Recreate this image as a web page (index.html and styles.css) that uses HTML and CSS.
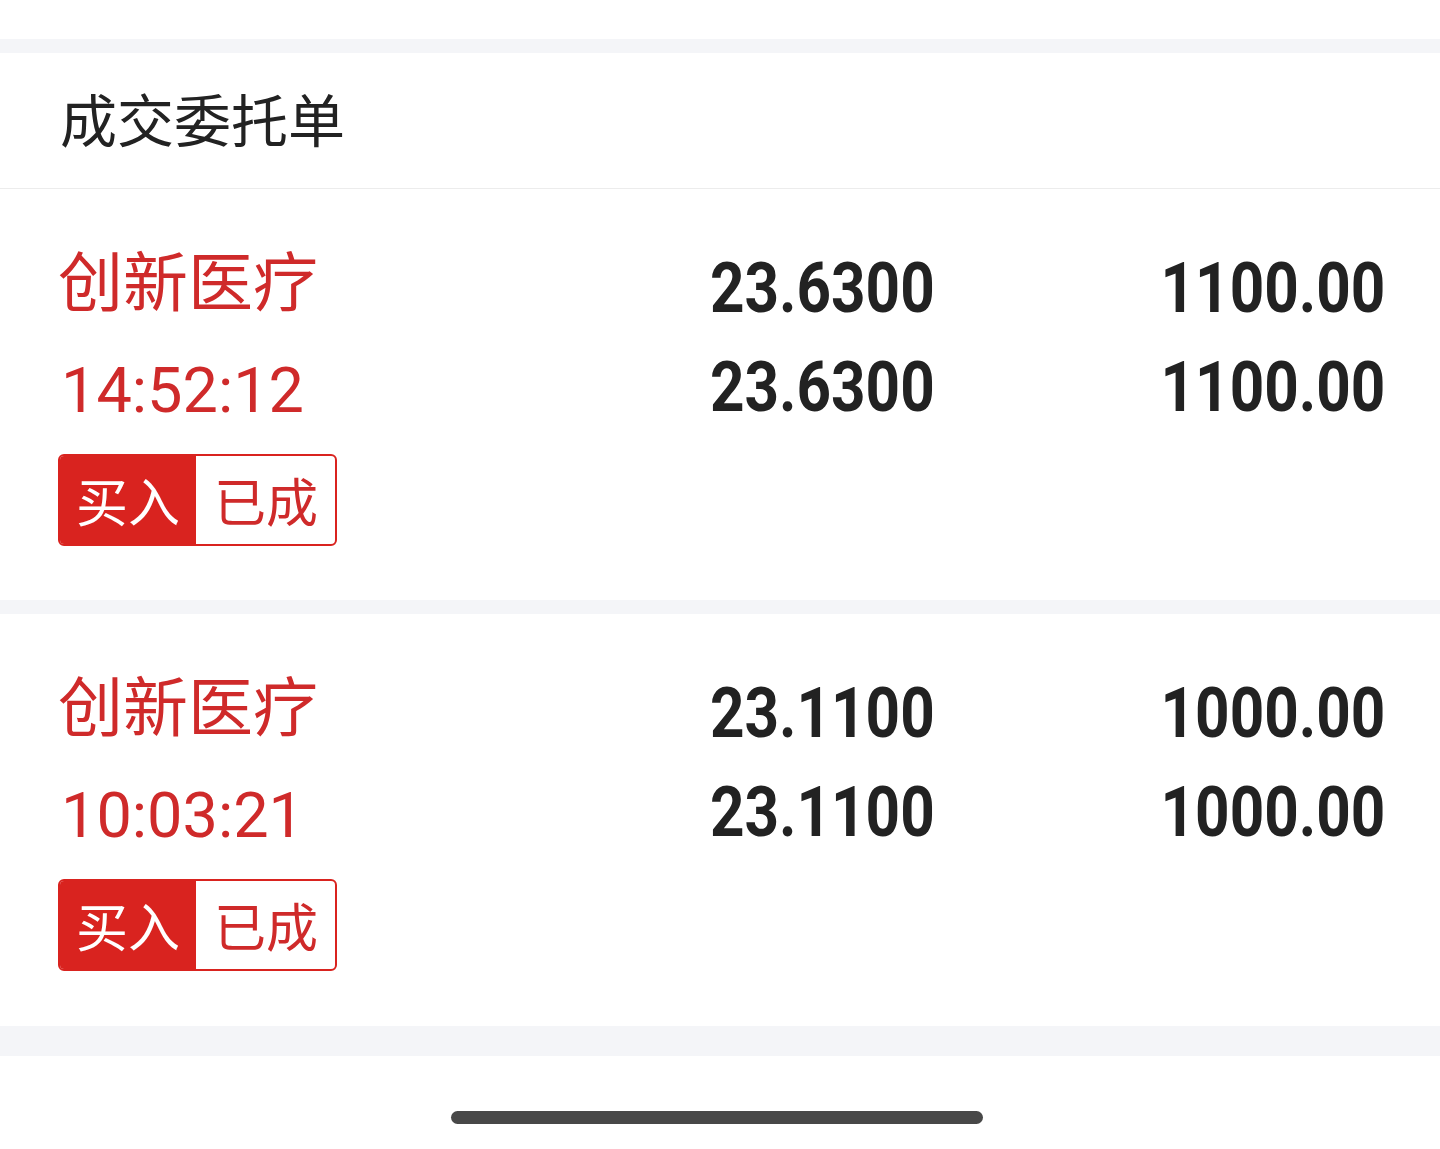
FILE: index.html
```html
<!DOCTYPE html>
<html lang="zh-CN">
<head>
  <meta charset="UTF-8" />
  <meta name="viewport" content="width=device-width, initial-scale=1.0" />
  <title>成交委托单</title>
  <link rel="stylesheet" href="styles.css">
</head>
<body>
  <div class="status-space"></div>
  <div class="band"></div>

  <header class="titulo">成交委托单</header>

  <div class="pedido">
    <div class="info">
      <div class="nome">创新医疗</div>
      <div class="hora">14:52:12</div>
      <div class="etiqueta">
        <span class="tipo">买入</span>
        <span class="estado">已成</span>
      </div>
    </div>
    <div class="col preco">
      <div>23.6300</div>
      <div>23.6300</div>
    </div>
    <div class="col qtd">
      <div>1100.00</div>
      <div>1100.00</div>
    </div>
  </div>

  <div class="band"></div>

  <div class="pedido">
    <div class="info">
      <div class="nome">创新医疗</div>
      <div class="hora">10:03:21</div>
      <div class="etiqueta">
        <span class="tipo">买入</span>
        <span class="estado">已成</span>
      </div>
    </div>
    <div class="col preco">
      <div>23.1100</div>
      <div>23.1100</div>
    </div>
    <div class="col qtd">
      <div>1000.00</div>
      <div>1000.00</div>
    </div>
  </div>

  <div class="band grossa"></div>

  <div class="home-area">
    <div class="home-bar"></div>
  </div>
</body>
</html>
```

FILE: styles.css
```css
* {
  box-sizing: border-box;
  margin: 0;
  padding: 0;
}
body {
  font-family: "Noto Sans CJK SC", "Noto Sans", sans-serif;
  background: #ffffff;
  color: #222;
  width: 1440px;
}
.status-space {
  height: 39px;
}
.band {
  height: 14px;
  background: #f4f5f8;
}
.band.grossa {
  height: 30px;
}
.titulo {
  height: 136px;
  padding: 0 0 8px 60px;
  display: flex;
  align-items: center;
  font-size: 57px;
  color: #222;
  border-bottom: 1px solid #ececec;
}
.pedido {
  display: flex;
  height: 411px;
  padding: 50px 55px 0 58px;
}
.pedido + .band + .pedido {
  height: 412px;
}
.info {
  width: 652px;
  padding-top: 7px;
}
.nome {
  font-size: 65px;
  line-height: 64px;
  color: #cf2a2a;
}
.hora {
  font-family: Roboto, "Noto Sans", sans-serif;
  font-size: 63px;
  line-height: 64px;
  color: #cf2a2a;
  margin-top: 49px;
  padding-left: 3px;
}
.etiqueta {
  display: inline-flex;
  margin-top: 31px;
  border: 2px solid #d9231f;
  border-radius: 6px;
  overflow: hidden;
  font-size: 52px;
  line-height: 88px;
}
.tipo {
  background: #d9231f;
  color: #fff;
  padding: 0 16px;
}
.estado {
  color: #cf2a2a;
  padding: 0 17px 0 18px;
}
.col {
  font-family: Roboto, "Liberation Sans", sans-serif;
  font-weight: bold;
  font-size: 70px;
  line-height: 99px;
  color: #222;
}
.col div {
  transform: scaleX(0.86);
}
.preco {
  flex: 1;
}
.preco div {
  transform-origin: left center;
}
.qtd {
  text-align: right;
}
.qtd div {
  transform-origin: right center;
}
.home-area {
  height: 92px;
  padding-top: 55px;
}
.home-bar {
  width: 532px;
  height: 13px;
  margin-left: 451px;
  background: #484848;
  border-radius: 7px;
}
```
